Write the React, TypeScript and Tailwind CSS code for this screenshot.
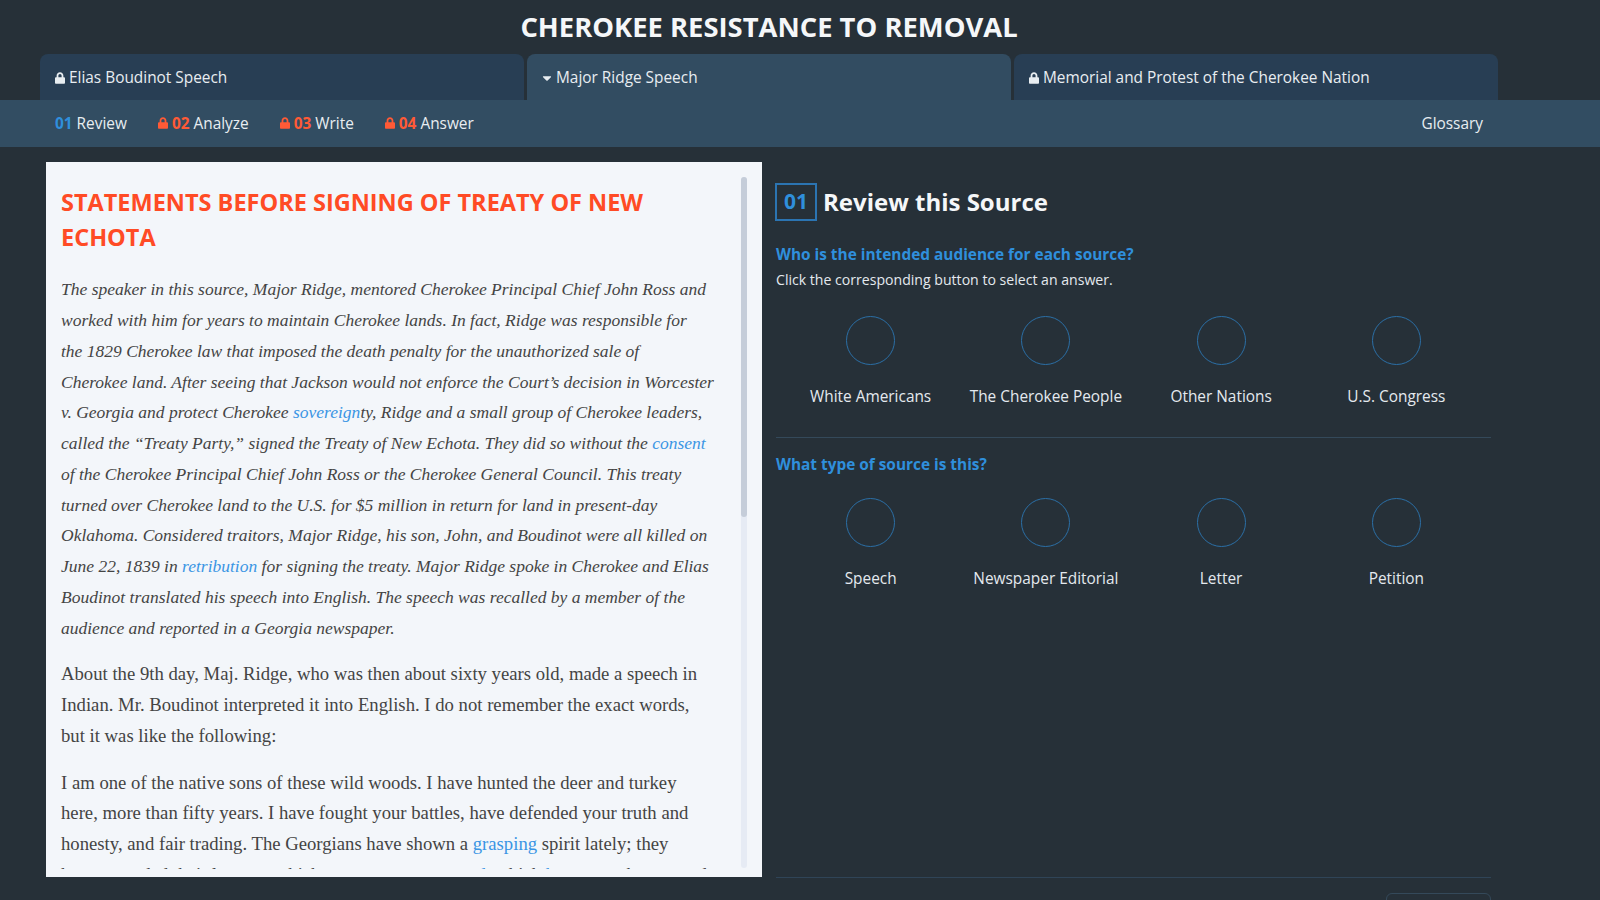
import React from 'react';
import { FaLock, FaCaretDown } from 'react-icons/fa';

const steps = [
  { num: '02', label: 'Analyze' },
  { num: '03', label: 'Write' },
  { num: '04', label: 'Answer' },
];

function Option({ label }: { label: string }) {
  return (
    <div className="flex flex-col items-center">
      <div className="w-[49px] h-[49px] rounded-full border border-[#2b6fa6]" />
      <div className="mt-[20px] text-[15.4px] leading-[24px] text-[#e4e9ee]">{label}</div>
    </div>
  );
}

function Tab({ title, active }: { title: string; active?: boolean }) {
  return (
    <div
      className={
        active
          ? 'flex-1 h-[46px] pt-[1px] rounded-t-lg bg-[#324c61] flex items-center gap-[4px] px-[15px] text-[15.4px] text-[#e8edf1]'
          : 'flex-1 h-[46px] pt-[1px] rounded-t-lg bg-[#283e54] flex items-center gap-[4px] px-[15px] text-[15.4px] text-[#e8edf1]'
      }
    >
      {active ? <FaCaretDown className="w-[10px] h-[14px]" /> : <FaLock className="w-[10px] h-[12px]" />}
      <span>{title}</span>
    </div>
  );
}

export default function App() {
  return (
    <div className="h-screen overflow-hidden bg-[#263038] font-['Open_Sans',sans-serif]">
      <div className="w-[1538px] h-[54px] flex items-center justify-center">
        <h1 className="text-[27.4px] font-bold text-[#f5f7f9]">CHEROKEE RESISTANCE TO REMOVAL</h1>
      </div>

      <div className="w-[1538px] pl-[40px] pr-[40px] flex gap-[3px]">
        <Tab title="Elias Boudinot Speech" />
        <Tab title="Major Ridge Speech" active />
        <Tab title="Memorial and Protest of the Cherokee Nation" />
      </div>

      <div className="h-[47px] bg-[#324d62] flex items-center pl-[55px] pr-[117px] text-[15.4px] text-[#e8edf1]">
        <div className="mr-[31px]">
          <span className="font-bold text-[#2f8fdc]">01</span> Review
        </div>
        {steps.map(s => (
          <div key={s.num} className="mr-[31px] flex items-center gap-[4px]">
            <FaLock className="w-[10px] h-[12px] text-[#ff5a36]" />
            <span>
              <span className="font-bold text-[#ff5a36]">{s.num}</span> {s.label}
            </span>
          </div>
        ))}
        <div className="ml-auto">Glossary</div>
      </div>

      <div className="flex pl-[46px] pt-[15px]">
        <div className="relative w-[716px] h-[715px] bg-[#f3f6fa] pt-[15px]">
          <div className="h-[692px] overflow-hidden pl-[15px] pt-[8px]">
            <h2 className="text-[23.5px] leading-[34.7px] font-bold text-[#ff4b25]">
              STATEMENTS BEFORE SIGNING OF TREATY OF NEW
              <br />
              ECHOTA
            </h2>
            <div className="mt-[20px] font-['Liberation_Serif',serif] text-[18.7px] leading-[30.75px] text-[#444444] whitespace-nowrap">
              <p className="italic text-[17.5px]">
                The speaker in this source, Major Ridge, mentored Cherokee Principal Chief John Ross and
                <br />
                worked with him for years to maintain Cherokee lands. In fact, Ridge was responsible for
                <br />
                the 1829 Cherokee law that imposed the death penalty for the unauthorized sale of
                <br />
                Cherokee land. After seeing that Jackson would not enforce the Court’s decision in Worcester
                <br />
                v. Georgia and protect Cherokee <span className="text-[#3a95e4]">sovereign</span>ty, Ridge and a small group of Cherokee leaders,
                <br />
                called the “Treaty Party,” signed the Treaty of New Echota. They did so without the <span className="text-[#3a95e4]">consent</span>
                <br />
                of the Cherokee Principal Chief John Ross or the Cherokee General Council. This treaty
                <br />
                turned over Cherokee land to the U.S. for $5 million in return for land in present-day
                <br />
                Oklahoma. Considered traitors, Major Ridge, his son, John, and Boudinot were all killed on
                <br />
                June 22, 1839 in <span className="text-[#3a95e4]">retribution</span> for signing the treaty. Major Ridge spoke in Cherokee and Elias
                <br />
                Boudinot translated his speech into English. The speech was recalled by a member of the
                <br />
                audience and reported in a Georgia newspaper.
              </p>
              <p className="mt-[16px]">
                About the 9th day, Maj. Ridge, who was then about sixty years old, made a speech in
                <br />
                Indian. Mr. Boudinot interpreted it into English. I do not remember the exact words,
                <br />
                but it was like the following:
              </p>
              <p className="mt-[16px]">
                I am one of the native sons of these wild woods. I have hunted the deer and turkey
                <br />
                here, more than fifty years. I have fought your battles, have defended your truth and
                <br />
                honesty, and fair trading. The Georgians have shown a <span className="text-[#3a95e4]">grasping</span> spirit lately; they
                <br />
                have extended their laws, to which we are <span className="text-[#3a95e4]">unaccustomed</span>, which <span className="text-[#3a95e4]">harass</span> our braves and
              </p>
            </div>
          </div>
          {/* scrollbar */}
          <div className="absolute left-[695px] top-[15px] w-[6px] h-[691px] rounded-full bg-[#e6ebf4]">
            <div className="w-[6px] h-[340px] rounded-full bg-[#c5cdd9]" />
          </div>
        </div>

        {/* questions */}
        <div className="ml-[14px] w-[715px]">
          <div className="mt-[21px] -ml-[1px] flex items-center gap-[6px]">
            <div className="w-[42px] h-[38px] border-2 border-[#2b74b2] flex items-center justify-center text-[21px] font-bold text-[#2f8fdc]">
              01
            </div>
            <h2 className="text-[24px] font-bold text-[#f5f7f9]">Review this Source</h2>
          </div>

          <h3 className="mt-[22px] text-[15.4px] leading-[24px] font-bold text-[#2f8fdc]">
            Who is the intended audience for each source?
          </h3>
          <p className="mt-[2px] text-[14.1px] leading-[22px] text-[#e4e9ee]">
            Click the corresponding button to select an answer.
          </p>

          <div className="mt-[25px] mx-[7px] grid grid-cols-4">
            <Option label="White Americans" />
            <Option label="The Cherokee People" />
            <Option label="Other Nations" />
            <Option label="U.S. Congress" />
          </div>

          <div className="mt-[28px] border-t border-[#34495a]" />

          <h3 className="mt-[15px] text-[15.4px] leading-[24px] font-bold text-[#2f8fdc]">What type of source is this?</h3>

          <div className="mt-[21px] mx-[7px] grid grid-cols-4">
            <Option label="Speech" />
            <Option label="Newspaper Editorial" />
            <Option label="Letter" />
            <Option label="Petition" />
          </div>

          <div className="mt-[286px] border-t border-[#2f4457]" />
          <div className="mt-[15px] ml-auto w-[105px] h-[40px] rounded-md border border-[#34495a]" />
        </div>
      </div>
    </div>
  );
}
